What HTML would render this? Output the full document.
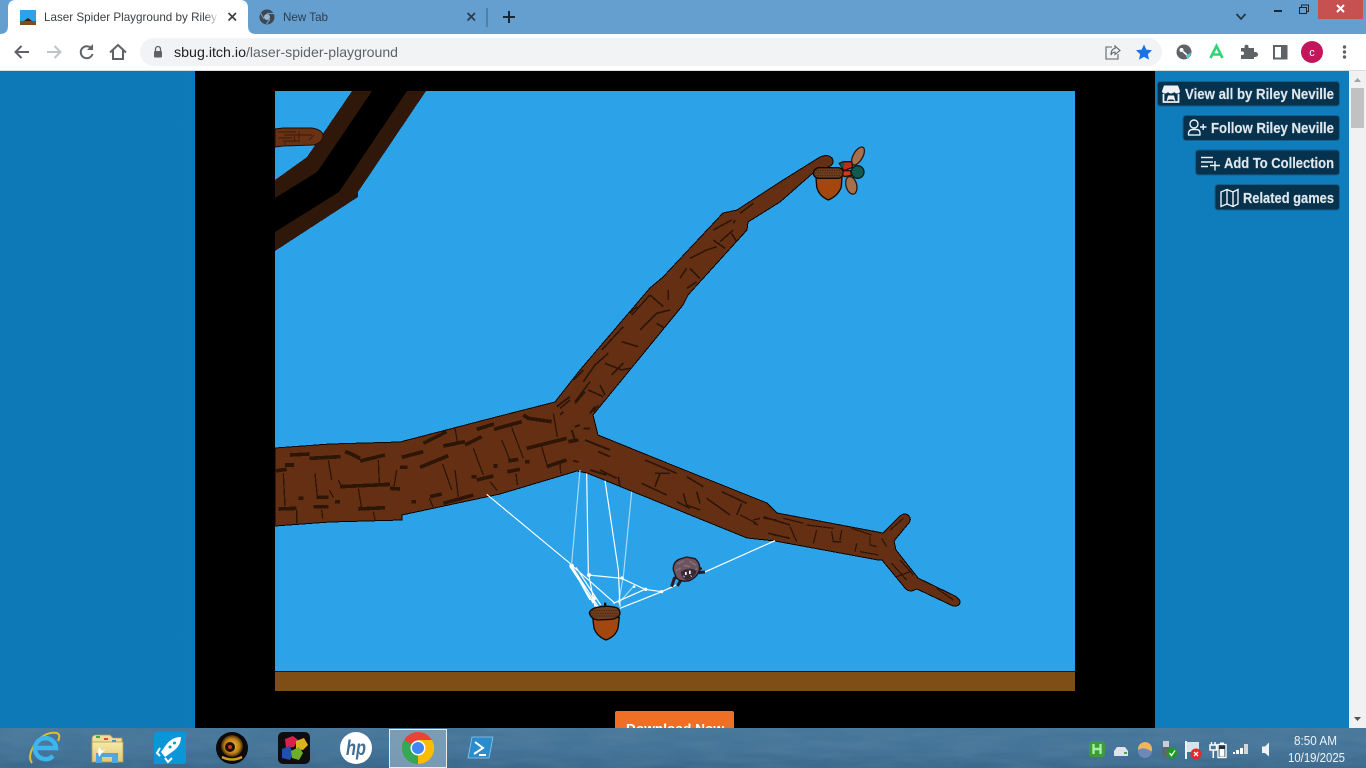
<!DOCTYPE html>
<html lang="en">
<head>
<meta charset="utf-8">
<title>Laser Spider Playground by Riley Neville</title>
<style>
html,body{margin:0;padding:0;width:1366px;height:768px;overflow:hidden;background:#0d7ab8}
svg{display:block;position:absolute;left:0;top:0}
text{font-family:"Liberation Sans",sans-serif}
</style>
</head>
<body>
<svg xmlns="http://www.w3.org/2000/svg" width="1366" height="768" viewBox="0 0 1366 768">
<defs>
<filter id="tex" x="0" y="0" width="100%" height="100%">
<feTurbulence type="fractalNoise" baseFrequency="0.02 0.12" numOctaves="4" seed="11"/>
<feColorMatrix values="0 0 0 0 0.12  0 0 0 0 0.27  0 0 0 0 0.42  1.5 0 0 0 -0.45"/>
</filter>
<linearGradient id="side" x1="0" x2="1" y1="0" y2="0"><stop offset="0" stop-color="#0d79b6"/><stop offset="1" stop-color="#0f7dbc"/></linearGradient>
<linearGradient id="tb" x1="0" x2="0" y1="0" y2="1"><stop offset="0" stop-color="#467699"/><stop offset=".5" stop-color="#447498"/><stop offset="1" stop-color="#3a688c"/></linearGradient>
<linearGradient id="fold" x1="0" x2="0" y1="0" y2="1"><stop offset="0" stop-color="#f6e9a8"/><stop offset="1" stop-color="#e0c676"/></linearGradient>
<radialGradient id="web" cx=".5" cy=".5" r=".5"><stop offset="0" stop-color="#ffc93a"/><stop offset=".7" stop-color="#b87a14"/><stop offset="1" stop-color="#3a2608"/></radialGradient>
<linearGradient id="fade" x1="0" x2="1" y1="0" y2="0"><stop offset="0" stop-color="#fff" stop-opacity="0"/><stop offset="1" stop-color="#fff"/></linearGradient>
<path id="br" d="M275,448L330,444L400,442L500,416L555,402L580,370L650,288L663,277L723,213L737,210L780,182L820,157Q830,153 833,160Q834,165 828,167L813,173L780,202L748,222L747,230L688,295L683,305L593,415L598,435L667,463L767,503L777,513L883,533L900,516Q905,512 909,516Q912,520 908,524L894,541L896,550L918,578L955,596Q961,600 960,603Q958,607 953,606L917,589L912,591Q907,591 905,588L882,560L878,560L775,541L747,538L587,473L577,471L500,494L402,515L402,520L330,522L275,526Z"/>
<clipPath id="brc"><use href="#br"/></clipPath>
</defs>

<!-- page -->
<rect x="0" y="71" width="1349" height="660" fill="url(#side)"/>
<rect x="195" y="71" width="960" height="660" fill="#000"/>
<rect x="275" y="91" width="800" height="600" fill="#2ca3e8"/>
<rect x="275" y="671" width="800" height="20" fill="#7f4e17"/>
<rect x="275" y="671" width="800" height="1" fill="#1e1206"/>

<!-- dark background branches -->
<g shape-rendering="crispEdges">
<polygon points="352,91 372,91 322,165 317,172 275,198 275,180 307,157" fill="#2f1809"/>
<polygon points="407,91 426,91 358,192 358,197 275,251 275,232 339,192" fill="#2f1809"/>
<polygon points="372,91 407,91 339,192 275,232 275,198 317,172 322,165" fill="#000"/>
</g>
<!-- small branch -->
<path d="M275,129L283,128H312Q323,130 323,136Q323,142 314,145L283,146L275,147Z" fill="#6a3215" stroke="#1c0d04" stroke-width="1"/>
<path d="M278,132H296M284,135H312M299,131V140M278,138H292M283,141H300M309,140L314,135M285,142V145M294,136L295,141" fill="none" stroke="#3a1c0a" stroke-width="1"/>

<!-- main branches -->
<use href="#br" fill="#652f14" stroke="#0a0502" stroke-width="1" shape-rendering="crispEdges"/>

<g clip-path="url(#brc)">
<g transform="translate(270 390) scale(.33333)" fill="none" stroke="#2e1607" shape-rendering="crispEdges">
<path stroke-width="11" d="M60,195L118,192M118,205L212,200M225,185L240,190L270,205M270,213L345,195M15,243L50,238M45,225L72,225M395,202L460,185M450,232L535,197M460,160L530,125M520,168L585,155M585,165L635,140M620,118L672,102M672,118L755,95M760,75L775,85L845,95M770,175L890,145M830,230L890,210M210,290L360,283M360,295L390,297M390,232L412,232M265,357L345,353M130,350L175,350M140,322L175,322M195,335L210,335M85,325L100,325M25,357L80,355M425,335L438,335M480,320L515,312M520,340L610,315M605,260L620,260M620,270L670,258M670,228L682,228M712,245L750,238M715,213L745,208M765,215L778,215M895,155L925,150"/>
<path stroke-width="4" d="M175,210L185,270M325,210L328,280M135,250L142,320M178,300L190,322M265,295L275,355M310,365L315,390M155,360L158,385M80,360L80,400M40,250L45,350M205,270L212,285M380,240L372,290M478,325L490,352M555,115L562,155M610,175L640,255M518,222L545,300M555,240L565,320M695,150L720,210M725,112L760,205M850,70L862,140M815,170L832,228M870,220L872,250M660,275L682,302M738,250L742,285"/>
<path stroke-width="6" d="M860,50L900,20M915,40L945,5M870,75L880,65M905,120L915,150M930,105L915,110M940,115L960,115M945,150L1020,180M960,70L975,50M985,185L1020,200M910,212L925,216M960,240L1010,255"/>
</g>
<g transform="translate(550 200) scale(.33333)" fill="none" stroke="#2e1607" stroke-width="5" shape-rendering="crispEdges">
<path d="M30,625L60,600M75,605L120,545M115,570L160,590M100,545L135,495L175,460M155,450L220,380M215,425L265,440M185,525L220,490M130,635L145,615M165,490L215,510L240,505M270,390L320,340L360,330M300,285L245,345M300,285L340,320M320,370L345,385M355,270L355,300M390,235L410,205M420,175L470,150L500,140M420,205L450,235M410,265L440,245M510,125L550,90M490,120L525,145M490,90L545,60M550,70L555,60M545,100L560,125M70,540L100,510M240,340L260,320M150,555L165,585M610,10L570,40"/>
</g>
<g transform="translate(470 460) scale(.33333)" fill="none" stroke="#2e1607" stroke-width="5" shape-rendering="crispEdges">
<path d="M525,0L620,40M650,50L700,80M515,70L590,105M555,80L570,40M555,40L600,40M620,125L660,145M640,100L650,135L690,150M680,95L690,130M710,115L780,165M755,95L830,130M815,130L800,165M850,180L870,175M880,170L960,195M895,220L960,235M445,50L450,80M390,30L440,55"/>
</g>
<g transform="translate(740 500) scale(.33333)" fill="none" stroke="#2e1607" stroke-width="4" shape-rendering="crispEdges">
<path d="M0,45L50,70M40,70L55,75M70,55L110,60M150,80L170,125M100,105L130,110M200,75L280,85M230,90L220,130M275,95L280,125L305,125M300,120L305,90M335,85L395,105M350,130L345,155M390,110L390,135L410,140M360,155L415,165M455,190L500,240M470,230L510,215M590,265L640,300M450,90L490,55M425,115L440,140M480,180L520,225M130,55L190,70"/>
</g>
</g>

<!-- acorn on tip + fly -->
<g transform="translate(780 130) scale(.33333)">
<ellipse cx="234" cy="78" rx="14" ry="30" transform="rotate(30 234 78)" fill="#a96f4c" stroke="#2b1a14" stroke-width="4"/>
<ellipse cx="214" cy="166" rx="16" ry="27" transform="rotate(-15 214 166)" fill="#a96f4c" stroke="#2b1a14" stroke-width="4"/>
<path d="M108,142H186L184,170Q176,196 145,210Q116,198 110,170Z" fill="#a3470f" stroke="#120703" stroke-width="4"/>
<path d="M100,128Q102,116 116,113H176Q190,116 190,128Q190,142 176,145H114Q100,142 100,128Z" fill="#6f3e1f" stroke="#120703" stroke-width="4"/>
<path d="M106,121H184M104,129H186M106,137H184" stroke="#45240e" stroke-width="3" stroke-dasharray="4 3"/>
<path d="M178,100L190,95L215,95L218,112L192,122Z" fill="#c62b14" stroke="#21100c" stroke-width="4"/>
<path d="M190,122H212L214,136L194,140L188,136Z" fill="#d6381c" stroke="#21100c" stroke-width="4"/>
<circle cx="233" cy="126" r="19" fill="#125a50" stroke="#06201c" stroke-width="4"/>
<path d="M180,104L195,95L190,115Z" fill="#125a50"/>
</g>

<!-- web -->
<g transform="translate(470 460) scale(.33333)" fill="none">
<path stroke="#a9dcf6" stroke-width="3.500" d="M330,30L305,310M485,95L460,350L445,430M490,380L445,430"/>
<path stroke="#fff" stroke-width="3.500" d="M50,103L300,310L385,440M350,40L355,340L375,440M405,62L445,330L450,440M915,242L700,338M630,370L575,395L450,445M310,320L435,430M355,345L455,355L525,388L575,395M300,320L380,440M310,325L370,430M525,388L430,430M300,312L360,420M318,322L392,435"/>
<g fill="#fff"><circle cx="305" cy="318" r="7"/><circle cx="357" cy="345" r="6"/><circle cx="456" cy="354" r="5"/><circle cx="492" cy="380" r="4"/><circle cx="527" cy="388" r="5"/><circle cx="575" cy="395" r="5"/><circle cx="372" cy="415" r="6"/></g>
<!-- acorn -->
<path d="M368,472L372,505Q382,530 408,540Q436,530 444,505L448,472Z" fill="#a3470f" stroke="#120703" stroke-width="4"/>
<path d="M358,458Q362,447 378,443Q410,434 440,443Q450,448 450,462Q445,475 425,478L385,480Q362,478 358,458Z" fill="#6f3e1f" stroke="#120703" stroke-width="4"/>
<path d="M366,452H444M362,460H446M366,468H442" stroke="#45240e" stroke-width="3" stroke-dasharray="4 3"/>
<rect x="402" y="428" width="7" height="12" fill="#1c0e05"/>
<!-- spider -->
<path d="M605,380L613,355L632,345M632,362L622,378M685,338L705,336M675,318L695,328" stroke="#2a1c24" stroke-width="9"/>
<path d="M610,330Q608,305 630,297L650,291L675,296Q692,310 688,330Q682,352 658,362Q630,368 618,352Z" fill="#6b5560" stroke="#1e1319" stroke-width="4"/>
<path d="M622,312L642,302M658,303L678,316M618,332L632,324M642,316L660,320M670,332L682,326" stroke="#8a7279" stroke-width="4"/>
<path d="M632,336Q655,318 680,332Q676,354 652,360Q636,358 632,336Z" fill="#3a2a33"/>
<path d="M645,336h5v9h-5zM657,332h5v10h-5z" fill="#fff"/>
<path d="M640,347l4,5M662,346l3,5" stroke="#fff" stroke-width="2"/>
</g>

<!-- download -->
<rect x="615" y="711" width="119" height="30" rx="2" fill="#ef7024"/>
<text x="626" y="733.500" font-size="14" font-weight="700" fill="#fff" textLength="98" lengthAdjust="spacingAndGlyphs">Download Now</text>

<!-- side buttons -->
<g fill="#07324e" stroke="#14618f" stroke-width="1">
<rect x="1157.500" y="81.500" width="182" height="24.500" rx="3"/>
<rect x="1183" y="115.500" width="156.500" height="25" rx="3"/>
<rect x="1195.500" y="150" width="144" height="25" rx="3"/>
<rect x="1215" y="184.500" width="124.500" height="25.500" rx="3"/>
</g>
<g font-size="14.500" font-weight="700" fill="#dfe7ec" stroke="#dfe7ec" stroke-width=".15">
<text x="1185" y="99" textLength="149" lengthAdjust="spacingAndGlyphs">View all by Riley Neville</text>
<text x="1211" y="133" textLength="123" lengthAdjust="spacingAndGlyphs">Follow Riley Neville</text>
<text x="1224" y="168" textLength="110" lengthAdjust="spacingAndGlyphs">Add To Collection</text>
<text x="1243" y="203" textLength="91" lengthAdjust="spacingAndGlyphs">Related games</text>
</g>
<!-- button icons -->
<g fill="none" stroke="#eef2f5" stroke-width="1.400">
<path d="M1164,85.500H1178L1180,91Q1180,93.500 1177,93.500Q1175,93.500 1174.500,92Q1173,93.500 1171,93.500Q1169,93.500 1168,92Q1167,93.500 1165,93.500Q1162,93.500 1162,91Z" fill="#eef2f5" stroke="none"/>
<path d="M1163.500,94V102H1178.500V94" stroke-width="1.800"/>
<path d="M1166.500,101.500L1168,95.500H1174L1175.500,101.500L1173,99.500H1169Z" fill="#eef2f5" stroke="none"/>
<circle cx="1194" cy="124" r="4"/>
<path d="M1188.500,135V133Q1189,129.500 1193,129.500H1196Q1200,129.500 1200,133V135"/>
<path d="M1188,135H1200.500"/>
<path d="M1200,127H1206.500M1203.200,124V130"/>
<path d="M1201,157.500H1213M1201,162H1213M1201,166.500H1208M1210,165.500H1220M1215,161V170.500"/>
<path d="M1221,192L1227,189.500L1233,192L1238,189.500V204L1233,206.500L1227,204L1221,206.500ZM1227,190V204M1233,192V206"/>
</g>

<!-- scrollbar -->
<rect x="1349" y="71" width="17" height="660" fill="#f1f1f1"/>
<rect x="1351" y="88" width="13" height="40" fill="#c1c1c1"/>
<path d="M1354,82L1357.500,78L1361,82Z" fill="#a3a3a3"/>
<path d="M1354,717H1361L1357.500,721Z" fill="#505050"/>

<!-- title bar -->
<rect x="0" y="0" width="1366" height="34" fill="#649fd0"/>
<path d="M0,34Q8,34 8,26V8Q8,0 16,0H240Q248,0 248,8V26Q248,34 256,34Z" fill="#fff"/>
<rect x="20" y="10" width="16" height="15" fill="#2ca3e8"/>
<rect x="20" y="21" width="16" height="4" fill="#7f4e17"/>
<path d="M24,21L28,18L32,21Z" fill="#3c1d0a"/>
<text x="44" y="21" font-size="12" fill="#3c4043" textLength="173" lengthAdjust="spacingAndGlyphs">Laser Spider Playground by Riley</text>
<rect x="205" y="9" width="14" height="16" fill="url(#fade)"/>
<path d="M228.500,13L236,20.500M236,13L228.500,20.500" stroke="#3c4043" stroke-width="1.700"/>
<circle cx="267" cy="17" r="7.500" fill="#3f464d"/>
<circle cx="267" cy="17" r="3" fill="#9ab8d2"/>
<path d="M267,13.500H274M264,19L260.500,13M270,19L266.500,24" stroke="#649fd0" stroke-width="1.200"/>
<text x="283" y="21" font-size="12" fill="#2f3d4b" textLength="45" lengthAdjust="spacingAndGlyphs">New Tab</text>
<path d="M467.500,13L475,20.500M475,13L467.500,20.500" stroke="#2b3a48" stroke-width="1.700"/>
<rect x="486.500" y="8" width="1" height="19" fill="#3f5f7c"/>
<path d="M503,17H515M509,11V23" stroke="#1b2733" stroke-width="2"/>
<path d="M1236.500,14L1241,19L1245.500,14" fill="none" stroke="#26323e" stroke-width="1.700"/>
<rect x="1274" y="10" width="8" height="2" fill="#1b2733"/>
<path d="M1299.500,7.500H1306.500V13.500H1299.500ZM1301.500,7.500V5H1308.500V11.500H1306.500" fill="none" stroke="#1b2733" stroke-width="1"/>
<rect x="1318" y="0" width="45" height="19" fill="#c75050"/>
<path d="M1337,5L1344,12M1344,5L1337,12" stroke="#fff" stroke-width="2"/>

<!-- toolbar -->
<rect x="0" y="34" width="1366" height="37" fill="#fff"/>
<rect x="0" y="70" width="1366" height="1" fill="#dadce0"/>
<path d="M29,52H16M21.500,46L15.500,52L21.500,58" fill="none" stroke="#5f6368" stroke-width="2"/>
<path d="M47,52H60M54.500,46L60.500,52L54.500,58" fill="none" stroke="#c0c3c7" stroke-width="2"/>
<path d="M91.500,48.500A6,6 0 1 0 92.500,54" fill="none" stroke="#5f6368" stroke-width="2"/>
<path d="M93,44V50H87Z" fill="#5f6368"/>
<path d="M110,52.500L118,45L126,52.500M113,50.500V59H123V50.500" fill="none" stroke="#5f6368" stroke-width="2"/>
<rect x="140" y="38" width="1022" height="28" rx="14" fill="#f1f3f4"/>
<rect x="154" y="51" width="8" height="6.500" rx="1" fill="#5f6368"/>
<path d="M155.500,51V49A2.500,2.500 0 0 1 160.500,49V51" fill="none" stroke="#5f6368" stroke-width="1.300"/>
<text x="174" y="57" font-size="14" fill="#202124" textLength="72" lengthAdjust="spacingAndGlyphs">sbug.itch.io</text>
<text x="246" y="57" font-size="14" fill="#5f6368" textLength="152" lengthAdjust="spacingAndGlyphs">/laser-spider-playground</text>
<path d="M1112,47H1106V59H1118V54M1111,55Q1111,49 1115,48.500V46L1120,50.500L1115,54.500V52Q1112.500,52 1111,55Z" fill="none" stroke="#5f6368" stroke-width="1.100"/>
<path d="M1144,44.500L1146.400,49.600L1152,50.300L1147.900,54.100L1149,59.600L1144,56.900L1139,59.600L1140.100,54.100L1136,50.300L1141.600,49.600Z" fill="#1a73e8"/>
<circle cx="1184" cy="52" r="7.500" fill="#5f6368"/>
<circle cx="1181.500" cy="50" r="2" fill="#fff"/>
<path d="M1183,51.500L1187,55" stroke="#fff" stroke-width="1.500"/>
<path d="M1186,56L1191,52.500A7.500,7.500 0 0 1 1187,58.500Z" fill="#4fd1d9"/>
<path d="M1210.500,58L1216.500,46L1222.500,58M1212.500,54.500H1220.500" fill="none" stroke="#2ed573" stroke-width="2.600"/>
<path d="M1241,48H1244.500V46.800A2,2 0 0 1 1248.500,46.800V48H1254V52H1255.500A2.300,2.300 0 0 1 1255.500,57H1254V59H1241V55H1243A2,2 0 0 0 1243,51.500H1241Z" fill="#5f6368"/>
<rect x="1274" y="46" width="12.500" height="12.500" fill="none" stroke="#5f6368" stroke-width="2"/>
<rect x="1281" y="46" width="6" height="13" fill="#5f6368"/>
<circle cx="1312" cy="52" r="11" fill="#c2185b"/>
<text x="1312" y="56" font-size="11" fill="#fff" text-anchor="middle">c</text>
<g fill="#5f6368"><circle cx="1344.500" cy="47" r="1.700"/><circle cx="1344.500" cy="52" r="1.700"/><circle cx="1344.500" cy="57" r="1.700"/></g>

<!-- taskbar -->
<rect x="0" y="728" width="1366" height="40" fill="url(#tb)"/>
<rect x="0" y="728" width="1366" height="40" filter="url(#tex)" opacity=".35"/>

<!-- IE -->
<path d="M32,763Q27,756 35,744Q45,731 57,733Q61,735 58,741" fill="none" stroke="#e5bc2a" stroke-width="2"/>
<path d="M36,748H56A10.500,10.500 0 1 0 53,756" fill="none" stroke="#3db5ee" stroke-width="4.500"/>
<!-- folder -->
<path d="M92,739Q92,735 96,735H110L113,738H122V750H92Z" fill="#f0dc9a" stroke="#b59a52" stroke-width=".8"/>
<rect x="96" y="736" width="4" height="2" fill="#3fae3f"/><rect x="104" y="738" width="4" height="2" fill="#d84a3a"/><rect x="112" y="740" width="4" height="2" fill="#3f8fd8"/>
<rect x="92" y="742" width="31" height="20" fill="url(#fold)" stroke="#b59a52" stroke-width=".8"/>
<path d="M96,763V753H118V763H112V757H102V763Z" fill="#4fa7dc"/>
<path d="M99,747L102,751L106,749L102,753L99,757L98,752Z" fill="#fff"/>
<!-- rocket -->
<path d="M157,732H186V761Q186,764 183,764H154V735Q154,732 157,732Z" fill="#0b96da"/>
<path d="M181,737Q172,737 166,745L161,752L165,757L172,752Q181,746 181,737Z" fill="#fff"/>
<circle cx="170" cy="747" r="1.500" fill="#0b96da"/><circle cx="174.500" cy="743" r="1.500" fill="#0b96da"/>
<path d="M160,748L157,753L160,756M165,758L168,762L172,758" fill="none" stroke="#fff" stroke-width="2"/>
<!-- cam -->
<circle cx="232" cy="748" r="16" fill="#0a0a0a"/>
<circle cx="232" cy="746" r="11" fill="url(#web)"/>
<circle cx="230" cy="747" r="5" fill="#1a1208"/>
<circle cx="230" cy="747" r="2" fill="#d92b2b"/>
<path d="M222,757Q232,762 242,757" fill="none" stroke="#d99a1c" stroke-width="2.500"/>
<!-- puzzle -->
<rect x="278" y="732" width="32" height="32" rx="5" fill="#0e0e0e"/>
<path d="M285,739L293,736L298,740L294,747L286,748Z" fill="#d9214e"/>
<path d="M296,741L304,738L308,745L303,750L296,749Z" fill="#d8b420"/>
<path d="M282,749L290,746L293,754L290,760L282,758Z" fill="#1f4fb0"/>
<path d="M291,751L299,747L303,753L299,760L292,758Z" fill="#6fae2a"/>
<!-- hp -->
<circle cx="356" cy="748" r="16" fill="#fff"/>
<text x="356" y="755" font-size="21" font-weight="700" font-style="italic" fill="#3f6f95" text-anchor="middle" textLength="20" lengthAdjust="spacingAndGlyphs">hp</text>
<!-- chrome -->
<rect x="389.500" y="729.500" width="57" height="38" fill="#8ca8bd" fill-opacity=".75" stroke="#e6eef4" stroke-width="1"/>
<circle cx="418" cy="748" r="16" fill="#ea4335"/>
<path d="M418,748L404.100,740A16,16 0 0 0 418,764L426,750Z" fill="#34a853"/>
<path d="M418,748L418,764A16,16 0 0 0 432,740H418Z" fill="#fbbc05"/>
<circle cx="418" cy="748" r="7.500" fill="#fff"/>
<circle cx="418" cy="748" r="6" fill="#4285f4"/>
<!-- ps -->
<path d="M472,737H493L489,758H468Z" fill="#2a8ccc" stroke="#8fc8ea" stroke-width=".8"/>
<path d="M475,742L483,748L474,754M479,755H486" fill="none" stroke="#fff" stroke-width="2"/>

<!-- tray -->
<rect x="1089" y="741" width="16" height="16" rx="3" fill="#3f9a3f"/>
<path d="M1093.500,744V754M1100.500,744V754M1093.500,749H1100.500" stroke="#9ff09f" stroke-width="2.400"/>
<path d="M1114,751L1117,747H1125L1128,751V756H1114Z" fill="#dfe4e8"/>
<rect x="1124" y="752" width="3" height="2" fill="#3fae3f"/>
<circle cx="1145" cy="749" r="7" fill="#f0b45a"/>
<path d="M1138,750Q1144,746 1152,752A7,7 0 0 1 1138,750Z" fill="#6d88b8"/>
<rect x="1163" y="741" width="6" height="7" fill="#c9ced2"/>
<rect x="1162" y="747" width="8" height="9" rx="1" fill="#5c6670"/>
<rect x="1165" y="755" width="2" height="4" fill="#5c6670"/>
<circle cx="1172" cy="753" r="5.500" fill="#1f9a2a"/>
<path d="M1169.500,753L1171.500,755.500L1175,750.500" fill="none" stroke="#fff" stroke-width="1.300"/>
<path d="M1186,741V759" stroke="#fff" stroke-width="1.800"/>
<path d="M1187,742H1199V752H1187Z" fill="#e9eef2" fill-opacity=".9"/>
<circle cx="1196" cy="754" r="5.500" fill="#e02b2b"/>
<path d="M1194,752L1198,756M1198,752L1194,756" stroke="#fff" stroke-width="1.300"/>
<path d="M1211.500,742V745M1215,742V745M1210,745H1216.500V750H1210ZM1213.300,750V758" fill="none" stroke="#fff" stroke-width="1.500"/>
<rect x="1220" y="742.500" width="4" height="2" fill="#fff"/>
<rect x="1218" y="744.500" width="8" height="13" fill="#1d3344" stroke="#fff" stroke-width="1.400"/>
<rect x="1219.500" y="749" width="5" height="7.500" fill="#fff"/>
<g fill="#fff"><rect x="1233" y="752" width="2" height="2"/><rect x="1236" y="750" width="3" height="4"/><rect x="1240" y="748" width="3" height="6"/></g>
<rect x="1244" y="744" width="4" height="10" fill="#cfd6dc"/>
<path d="M1262,746.500H1265L1269,742.500V756.500L1265,753H1262Z" fill="#f0f3f5"/>
<text x="1315.500" y="745" font-size="13" fill="#eef3f7" text-anchor="middle" textLength="43" lengthAdjust="spacingAndGlyphs">8:50 AM</text>
<text x="1316.500" y="762" font-size="13" fill="#eef3f7" text-anchor="middle" textLength="57" lengthAdjust="spacingAndGlyphs">10/19/2025</text>
</svg>
</body>
</html>
